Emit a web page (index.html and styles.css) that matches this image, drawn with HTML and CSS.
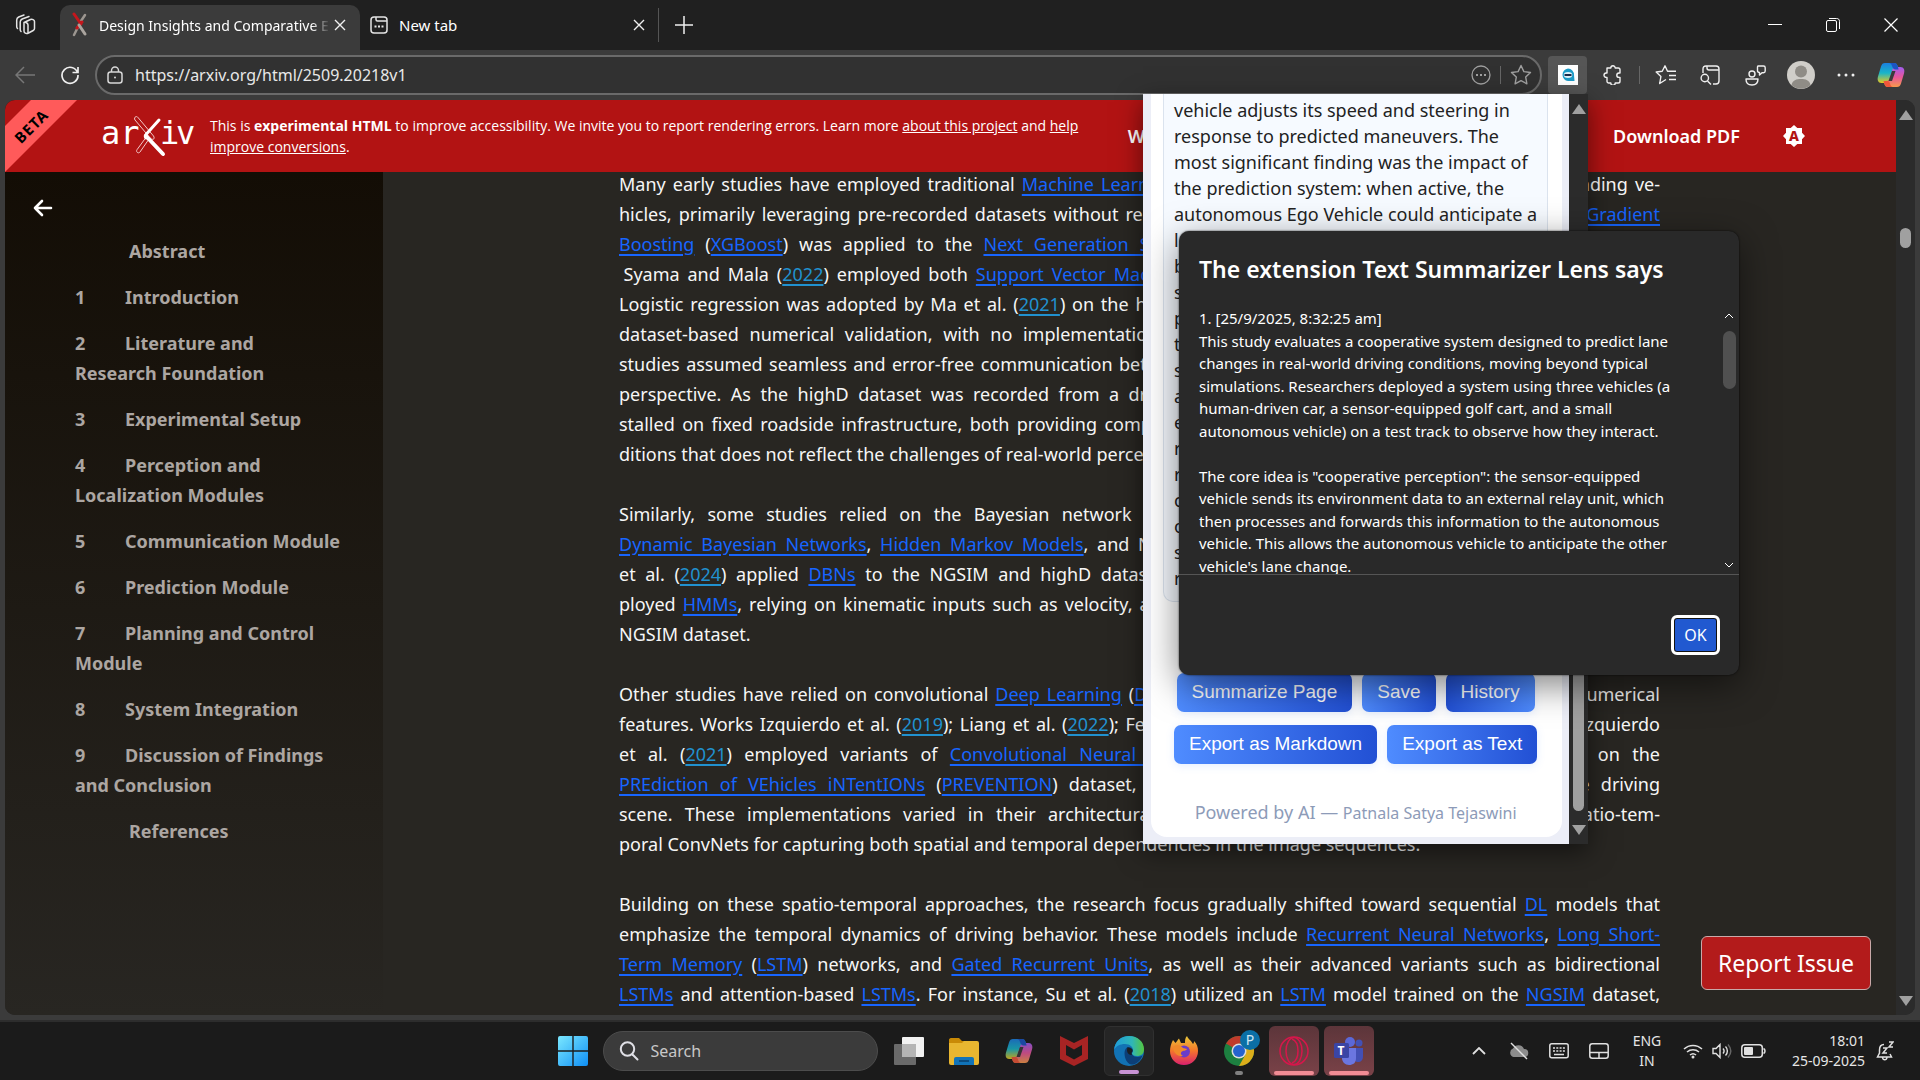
FILE: index.html
```html
<!DOCTYPE html>
<html lang="en">
<head>
  <meta charset="UTF-8">
  <meta name="viewport" content="width=device-width, initial-scale=1.0">
  <title>Design Insights and Comparative Evaluation</title>
  <link rel="stylesheet" href="styles.css">
</head>
<body>
  <svg class="defs" width="0" height="0" aria-hidden="true">
    <defs>
      <linearGradient id="cpBlue" x1="0" y1="0" x2="0" y2="1">
        <stop offset="0" stop-color="#1b7fe0"/><stop offset=".5" stop-color="#19b5c8"/><stop offset="1" stop-color="#e8c81e"/>
      </linearGradient>
      <linearGradient id="cpPink" x1="0" y1="0" x2="0" y2="1">
        <stop offset="0" stop-color="#a05cf0"/><stop offset=".5" stop-color="#e8569b"/><stop offset="1" stop-color="#f79a4b"/>
      </linearGradient>
      <linearGradient id="winBlue" x1="0" y1="0" x2="1" y2="1">
        <stop offset="0" stop-color="#7be8ff"/><stop offset="1" stop-color="#0f8ff5"/>
      </linearGradient>
      <linearGradient id="edgeTop" x1="0" y1="0" x2="1" y2="0">
        <stop offset="0" stop-color="#1f9bd8"/><stop offset=".6" stop-color="#2fb6b8"/><stop offset="1" stop-color="#55c63e"/>
      </linearGradient>
      <linearGradient id="ffOrange" x1="0" y1="0" x2="0" y2="1">
        <stop offset="0" stop-color="#e8c83a"/><stop offset=".5" stop-color="#f4772a"/><stop offset="1" stop-color="#d9206e"/>
      </linearGradient>
      <symbol id="copilot" viewBox="0 0 28 28">
        <path d="M8 2h9c2 0 3 1 3.600 3l.8 3h-3c-2 0-3 1-3.600 3l-2.600 8.500c-.6 2-1.600 2.500-3.500 2.500H4.500C1 22 0 19 1 15.500l3-10C4.700 3 6 2 8 2z" fill="url(#cpBlue)"/>
        <path d="M20 26h-9c-2 0-3-1-3.600-3L6.800 20h2.500c2 0 3-1 3.600-3l2.500-8.500C16 6.500 17 6 19 6h4.500c3.500 0 4.500 3 3.500 6.500l-3 10c-.7 2.500-2 3.500-4 3.500z" fill="url(#cpPink)"/>
        <path d="M12 2h5c2 0 3 1 3.600 3l1 3.500h-3c-2-.2-3-1.500-3.600-3.500-.5-2-1.500-3-3-3z" fill="#1b54c4"/>
        <path d="M6.500 20h3.400c1.600 0 2.600.6 3.100 2.500.5 2 1.500 3.500 3 3.500h-5c-2 0-3-1-3.500-3z" fill="#f0573a"/>
        <path d="M15 10h3.500L15 20h-3.500z" fill="#3b3b3b"/>
      </symbol>
    </defs>
  </svg>

  <div class="window">
    <div class="tabbar">
      <button class="workspaces" aria-label="Workspaces">
        <svg width="22" height="22" viewBox="0 0 22 22" fill="none" stroke="#e4e4e4" stroke-width="1.500" stroke-linejoin="round" stroke-linecap="round"><path d="M9 8.500l6.500-3c1.500-.7 4 .2 4 2v7c0 1-.4 1.600-1.300 2L13.500 19C11 20.200 9 19 9 17zM9 8.500c1.500-.5 4 .3 4 2.500v8"/><path d="M6 17.500c-.6-.5-.8-1-.8-2V8c0-1.500.6-2.200 2-3L14 2.500M2.500 14.500c-.6-.5-.8-1-.8-2V6c0-1.500.6-2.200 2-3L9 1"/></svg>
      </button>
      <div class="tab tab-active">
        <svg width="16" height="26" viewBox="0 0 16 26" fill="none" stroke-linecap="round"><path d="M13 3L9 9M6 15l-4 8" stroke="#9c9690" stroke-width="2.500"/><path d="M2 2l7 10M10 10l-5 6" stroke="#c4161c" stroke-width="3"/><path d="M7 13l6 9" stroke="#aaa49e" stroke-width="3"/></svg>
        <span class="tab-title fade">Design Insights and Comparative E</span>
        <button class="tab-close" aria-label="Close tab"><svg width="12" height="12" viewBox="0 0 12 12" stroke="#f0f0f0" stroke-width="1.400"><path d="M1 1l10 10M11 1L1 11"/></svg></button>
      </div>
      <div class="tab">
        <svg width="18" height="18" viewBox="0 0 18 18" fill="none" stroke="#e4e4e4" stroke-width="1.500"><rect x="1" y="1" width="16" height="16" rx="3"/><path d="M6 1v2.500c0 1 .5 1.500 1.500 1.500H17"/><path d="M4.500 10.500h2M8 10.500h2M11.500 10.500h2" stroke-width="2"/></svg>
        <span class="tab-title">New tab</span>
        <button class="tab-close" aria-label="Close tab"><svg width="12" height="12" viewBox="0 0 12 12" stroke="#f0f0f0" stroke-width="1.400"><path d="M1 1l10 10M11 1L1 11"/></svg></button>
      </div>
      <button class="new-tab" aria-label="New tab"><svg width="18" height="18" viewBox="0 0 18 18" stroke="#f0f0f0" stroke-width="1.500"><path d="M9 0v18M0 9h18"/></svg></button>
      <div class="window-controls">
        <button aria-label="Minimize"><svg width="14" height="14" viewBox="0 0 14 14" stroke="#fff"><path d="M0 6.500h14"/></svg></button>
        <button aria-label="Restore"><svg width="14" height="14" viewBox="0 0 14 14" fill="none" stroke="#fff"><rect x=".5" y="2.500" width="10" height="11" rx="1.500"/><path d="M3 .5h7.500c2 0 3 1 3 3V11"/></svg></button>
        <button aria-label="Close"><svg width="14" height="14" viewBox="0 0 14 14" stroke="#fff" stroke-width="1.200"><path d="M.5.5l13 13M13.500.5l-13 13"/></svg></button>
      </div>
    </div>

    <div class="toolbar">
      <button class="nav-btn" aria-label="Back"><svg width="20" height="18" viewBox="0 0 20 18" fill="none" stroke="#777" stroke-width="1.500"><path d="M9 1L1 9l8 8M1 9h19"/></svg></button>
      <button class="nav-btn" aria-label="Refresh"><svg width="20" height="20" viewBox="0 0 20 20" fill="none" stroke="#f0f0f0" stroke-width="1.700"><path d="M17.500 7.500A8 8 0 1 0 18 10M18 2v5.500h-5.500"/></svg></button>
      <div class="address">
        <svg width="16" height="18" viewBox="0 0 16 18" fill="none" stroke="#d8d8d8" stroke-width="1.500"><rect x="1" y="6" width="14" height="11" rx="2.500"/><path d="M4.500 6V4.500a3.500 3.500 0 0 1 7 0V6"/><circle cx="8" cy="11.500" r="1" fill="#d8d8d8" stroke="none"/></svg>
        <input class="url" type="text" aria-label="Address" value="https://arxiv.org/html/2509.20218v1">
        <button aria-label="More"><svg width="20" height="20" viewBox="0 0 20 20" fill="none" stroke="#a0a0a0" stroke-width="1.300"><circle cx="10" cy="10" r="9"/><path d="M5 10h2M9 10h2M13 10h2" stroke-width="2"/></svg></button>
        <span class="divider"></span>
        <button aria-label="Favorite"><svg width="22" height="22" viewBox="0 0 22 22" fill="none" stroke="#a0a0a0" stroke-width="1.400" stroke-linejoin="round"><path d="M11 1.500l2.900 6.100 6.600.9-4.800 4.600 1.200 6.700-5.900-3.200-5.900 3.200 1.200-6.700L1.500 8.500l6.600-.9z"/></svg></button>
      </div>
      <div class="tools">
        <button class="tool-active" aria-label="Text Summarizer Lens"><svg width="20" height="20" viewBox="0 0 20 20"><rect width="20" height="20" fill="#fff"/><path d="M10 3.500a6.300 6.300 0 0 1 6 6.500l.5 6H10a6.300 6.300 0 0 1 0-12.500z" fill="#1c9cc8"/><ellipse cx="10" cy="10" rx="4.300" ry="3" fill="#dff2fa"/><path d="M6.500 10h7" stroke="#1a2b4a" stroke-width="2"/></svg></button>
        <button aria-label="Extensions"><svg width="20" height="20" viewBox="0 0 20 20" fill="none" stroke="#f0f0f0" stroke-width="1.400" stroke-linejoin="round"><path d="M4 3h3.800a2.200 2.200 0 0 1 4.400 0h3c1 0 1.800.8 1.800 1.800V8h-1a2.200 2.200 0 0 0 0 4.400h1v3.800c0 1-.8 1.800-1.800 1.800h-3a2.200 2.200 0 0 1-4.400 0H5.800C4.800 18 4 17.200 4 16.200v-3.800H3.200a2.200 2.200 0 0 1 0-4.400H4z"/></svg></button>
        <span class="divider"></span>
        <button aria-label="Favorites"><svg width="22" height="20" viewBox="0 0 22 20" fill="none" stroke="#f0f0f0" stroke-width="1.400" stroke-linejoin="round"><path d="M11 14.500L4.700 18.500l1.200-7L1.200 7l6-.8L10 .8l2.500 5.400h8.500M14 10.500h7M14 14.500h7"/></svg></button>
        <button aria-label="Collections"><svg width="21" height="20" viewBox="0 0 21 20" fill="none" stroke="#f0f0f0" stroke-width="1.400"><path d="M3 8V4c0-1.800 1-3 3-3h10c2 0 3 1.200 3 3v12c0 2-1 3-3 3h-3M7 1v2c0 1.500.8 2 2 2h10"/><circle cx="4.800" cy="13" r="3.700"/><path d="M7.500 16l3.500 3.500"/></svg></button>
        <button aria-label="Feedback"><svg width="21" height="21" viewBox="0 0 21 21" fill="none" stroke="#f0f0f0" stroke-width="1.400" stroke-linejoin="round"><path d="M13 1h5.500c1 0 1.700.6 1.700 1.700V6c0 1-.7 1.700-1.700 1.700h-1.500L14.500 10V7.500c-1.500 0-2-.7-2-1.700V2.500C12.500 1.500 12.800 1 13 1z"/><circle cx="7" cy="9" r="3"/><path d="M1 14h12c0 4-1.500 6-6 6s-6-2-6-6z"/></svg></button>
        <button aria-label="Profile"><svg width="28" height="28" viewBox="0 0 28 28"><circle cx="14" cy="14" r="14" fill="#d0cec9"/><circle cx="14" cy="10.500" r="6" fill="#8f8c86"/><path d="M4.500 24c1-5 5-6 9.500-6s8.500 1 9.500 6A14 14 0 0 1 4.500 24z" fill="#8f8c86"/></svg></button>
        <button aria-label="Settings"><svg width="18" height="4" viewBox="0 0 18 4" fill="#f0f0f0"><circle cx="2" cy="2" r="1.500"/><circle cx="9" cy="2" r="1.500"/><circle cx="16" cy="2" r="1.500"/></svg></button>
        <button aria-label="Copilot"><svg width="28" height="28"><use href="#copilot"/></svg></button>
      </div>
    </div>

    <div class="viewport">
      <div class="page">
        <header class="site-header">
          <div class="beta"><span>BETA</span></div>
          <a class="logo" href="#" aria-label="arXiv">
            <svg width="94" height="44" viewBox="0 0 94 44">
              <text class="logo-text" x="-1" y="30">ar</text>
              <text class="logo-text" x="58" y="30">i</text>
              <text class="logo-text" x="74" y="30">v</text>
              <path d="M36 3.500L51.500 22c1 1.500.8 3-.3 3.300-1.200.2-2-.3-3-1.300L33 6c-1.500-2 1-5 3-2.500z" fill="none" stroke="#f3c8c8"/>
              <path d="M47 25L38 38c-1.500 2-4.500 0-3-2.300L45 22" fill="none" stroke="#f3c8c8"/>
              <path d="M57 6L44 20.500c-1 1-1 2 0 3.500" fill="none" stroke="#fff" stroke-width="3" stroke-linecap="round"/>
              <path d="M44 22l17 18" fill="none" stroke="#fff" stroke-width="4" stroke-linecap="round"/>
            </svg>
          </a>
          <p class="notice">This is <strong>experimental HTML</strong> to improve accessibility. We invite you to report rendering errors. Learn more <a href="#">about this project</a> and <a href="#">help<br>improve conversions</a>.</p>
          <nav class="site-nav">
            <a href="#">Why HTML?</a>
            <a href="#">Report Issue</a>
            <a href="#">Back to Abstract</a>
            <a href="#">Download PDF</a>
            <button aria-label="Toggle theme"><svg width="22" height="22" viewBox="0 0 22 22"><path d="M11 0l3.300 3H19v4.700L22 11l-3 3.300V19h-4.700L11 22l-3.300-3H3v-4.700L0 11l3-3.300V3h4.700z" fill="#fff"/><text class="theme-letter" x="11" y="16" text-anchor="middle">A</text></svg></button>
          </nav>
        </header>
        <div class="content">
          <aside class="toc">
            <button class="toc-back" aria-label="Hide contents"><svg width="20" height="18" viewBox="0 0 20 18" fill="none" stroke="#fff" stroke-width="2.600" stroke-linecap="round" stroke-linejoin="round"><path d="M9 2L2 9l7 7M2 9h16"/></svg></button>
            <ol>
              <li class="plain"><a href="#">Abstract</a></li>
              <li><a href="#"><span class="num">1</span>Introduction</a></li>
              <li><a href="#"><span class="num">2</span>Literature and<br>Research Foundation</a></li>
              <li><a href="#"><span class="num">3</span>Experimental Setup</a></li>
              <li><a href="#"><span class="num">4</span>Perception and<br>Localization Modules</a></li>
              <li><a href="#"><span class="num">5</span>Communication Module</a></li>
              <li><a href="#"><span class="num">6</span>Prediction Module</a></li>
              <li><a href="#"><span class="num">7</span>Planning and Control<br>Module</a></li>
              <li><a href="#"><span class="num">8</span>System Integration</a></li>
              <li><a href="#"><span class="num">9</span>Discussion of Findings<br>and Conclusion</a></li>
              <li class="plain"><a href="#">References</a></li>
            </ol>
          </aside>
          <article class="paper">
            <p>
              <span class="line">Many early studies have employed traditional <a href="#">Machine Learning</a> (<a href="#">ML</a>) for lane change prediction of the surrounding ve-</span>
              <span class="line">hicles, primarily leveraging pre-recorded datasets without real-time implementation. For instance, the <a href="#">eXtreme Gradient</a></span>
              <span class="line"><a href="#">Boosting</a> (<a href="#">XGBoost</a>) was applied to the <a href="#">Next Generation SIMulation</a> (<a href="#">NGSIM</a>) dataset by different research groups.</span>
              <span class="line">&#8197;Syama and Mala (<a class="cite" href="#">2022</a>) employed both <a href="#">Support Vector Machines</a> (<a href="#">SVMs</a>) and <a href="#">Random Forest</a> classifiers for prediction.</span>
              <span class="line">Logistic regression was adopted by Ma et al. (<a class="cite" href="#">2021</a>) on the highD dataset. These works were all limited to purely offline</span>
              <span class="line">dataset-based numerical validation, with no implementation on real vehicles. In addition, nearly all of these early</span>
              <span class="line">studies assumed seamless and error-free communication between vehicles, with all of their data taken from an elevated</span>
              <span class="line">perspective. As the highD dataset was recorded from a drone and the NGSIM data came from several cameras in-</span>
              <span class="line">stalled on fixed roadside infrastructure, both providing complete information on the whole scene and under ideal con-</span>
              <span class="line last">ditions that does not reflect the challenges of real-world perception systems.</span>
            </p>
            <p>
              <span class="line">Similarly, some studies relied on the Bayesian network family for the maneuver prediction tasks, including the</span>
              <span class="line"><a href="#">Dynamic Bayesian Networks</a>, <a href="#">Hidden Markov Models</a>, and Naive Bayes classifiers. The recent study of Zhang and Lin</span>
              <span class="line">et al. (<a class="cite" href="#">2024</a>) applied <a href="#">DBNs</a> to the NGSIM and highD datasets, whereas all of the other works in this direction em-</span>
              <span class="line">ployed <a href="#">HMMs</a>, relying on kinematic inputs such as velocity, acceleration and heading from the trajectories of the public</span>
              <span class="line last">NGSIM dataset.</span>
            </p>
            <p>
              <span class="line">Other studies have relied on convolutional <a href="#">Deep Learning</a> (<a href="#">DL</a>) models that process both camera images and numerical</span>
              <span class="line">features. Works Izquierdo et al. (<a class="cite" href="#">2019</a>); Liang et al. (<a class="cite" href="#">2022</a>); Fernández et al. (<a class="cite" href="#">2020a</a>); Benterki et al. (<a class="cite" href="#">2022b</a>) and Izquierdo</span>
              <span class="line">et al. (<a class="cite" href="#">2021</a>) employed variants of <a href="#">Convolutional Neural Networks</a> (<a href="#">CNNs</a>) for behavior prediction based on the</span>
              <span class="line"><a href="#">PREdiction of VEhicles iNTentIONs</a> (<a href="#">PREVENTION</a>) dataset, using many stacked RGB camera images of the driving</span>
              <span class="line">scene. These implementations varied in their architectural choices, from two-stream networks up to spatio-tem-</span>
              <span class="line last">poral ConvNets for capturing both spatial and temporal dependencies in the image sequences.</span>
            </p>
            <p>
              <span class="line">Building on these spatio-temporal approaches, the research focus gradually shifted toward sequential <a href="#">DL</a> models that</span>
              <span class="line">emphasize the temporal dynamics of driving behavior. These models include <a href="#">Recurrent Neural Networks</a>, <a href="#">Long Short-</a></span>
              <span class="line"><a href="#">Term Memory</a> (<a href="#">LSTM</a>) networks, and <a href="#">Gated Recurrent Units</a>, as well as their advanced variants such as bidirectional</span>
              <span class="line"><a href="#">LSTMs</a> and attention-based <a href="#">LSTMs</a>. For instance, Su et al. (<a class="cite" href="#">2018</a>) utilized an <a href="#">LSTM</a> model trained on the <a href="#">NGSIM</a> dataset,</span>
            </p>
          </article>
        </div>
        <button class="report">Report Issue</button>
      </div>
      <div class="scrollbar page-scroll">
        <span class="arrow-up"></span><span class="thumb"></span><span class="arrow-down"></span>
      </div>
    </div>
  </div>

  <section class="popup">
    <div class="popup-body">
      <div class="card">
        <p class="summary">vehicle adjusts its speed and steering in<br>response to predicted maneuvers. The<br>most significant finding was the impact of<br>the prediction system: when active, the<br>autonomous Ego Vehicle could anticipate a<br>lane change well before it happened and<br>begin to slow down early, making for a<br>smoother and safer response. Without<br>prediction, the vehicle only reacted once<br>the other car had entered its lane. The<br>study shows that shared perception<br>adds useful time for planning. It also<br>examines the delays of the relay and<br>reports that they stay small enough for<br>real use. The authors note that more<br>complex traffic and more vehicles are<br>open topics, and that future work will<br>study larger test areas with fully<br>realistic conditions.</p>
        <div class="actions">
          <button>Summarize Page</button>
          <button>Save</button>
          <button class="reverse">History</button>
        </div>
        <div class="actions">
          <button>Export as Markdown</button>
          <button>Export as Text</button>
        </div>
        <p class="credit">Powered by AI — <span>Patnala Satya Tejaswini</span></p>
      </div>
    </div>
    <div class="scrollbar popup-scroll">
      <span class="arrow-up"></span><span class="thumb"></span><span class="arrow-down"></span>
    </div>
  </section>

  <section class="alert" role="dialog" aria-labelledby="alert-title">
    <h2 id="alert-title">The extension Text Summarizer Lens says</h2>
    <div class="alert-scroll">
      <p>1. [25/9/2025, 8:32:25 am]<br>This study evaluates a cooperative system designed to predict lane<br>changes in real-world driving conditions, moving beyond typical<br>simulations. Researchers deployed a system using three vehicles (a<br>human-driven car, a sensor-equipped golf cart, and a small<br>autonomous vehicle) on a test track to observe how they interact.<br><br>The core idea is "cooperative perception": the sensor-equipped<br>vehicle sends its environment data to an external relay unit, which<br>then processes and forwards this information to the autonomous<br>vehicle. This allows the autonomous vehicle to anticipate the other<br>vehicle's lane change.</p>
      <div class="alert-bar">
        <svg width="10" height="6" viewBox="0 0 10 6" fill="none" stroke="#fff"><path d="M1 5l4-4 4 4"/></svg>
        <span class="alert-thumb"></span>
        <svg width="10" height="6" viewBox="0 0 10 6" fill="none" stroke="#fff"><path d="M1 1l4 4 4-4"/></svg>
      </div>
    </div>
    <div class="alert-foot"><button>OK</button></div>
  </section>

  <footer class="taskbar">
    <div class="apps">
      <button class="app" aria-label="Start"><svg width="30" height="30" viewBox="0 0 30 30" fill="url(#winBlue)"><path d="M0 2a2 2 0 0 1 2-2h12.300v14.300H0zM15.700 0H28a2 2 0 0 1 2 2v12.300H15.700zM0 15.700h14.300V30H2a2 2 0 0 1-2-2zM15.700 15.700H30V28a2 2 0 0 1-2 2H15.700z"/></svg></button>
      <label class="search">
        <svg width="20" height="20" viewBox="0 0 20 20" fill="none" stroke="#e0e0e6" stroke-width="2" stroke-linecap="round"><circle cx="8.500" cy="8" r="6.700"/><path d="M13.500 13.500l5 5"/></svg>
        <input type="text" placeholder="Search" aria-label="Search">
      </label>
      <button class="app" aria-label="Task view"><svg width="30" height="28" viewBox="0 0 30 28"><rect x="8" width="22" height="20" rx="1" fill="#f2f2f2"/><rect y="7" width="22" height="21" rx="1" fill="#6a6a6a"/><rect x="8" y="7" width="14" height="13" fill="#b5b5b5"/></svg></button>
      <button class="app" aria-label="File Explorer"><svg width="30" height="27" viewBox="0 0 30 27"><path d="M0 2C0 1 .7 0 2 0h8l3 3h10v5H0z" fill="#c98a06"/><path d="M0 5h13l2-2h13a2 2 0 0 1 2 2v20a2 2 0 0 1-2 2H2a2 2 0 0 1-2-2z" fill="#e8b630"/><path d="M5 27v-6a2 2 0 0 1 2-2h16a2 2 0 0 1 2 2v6z" fill="#1173b8"/><path d="M10 23h10" stroke="#0a4c80" stroke-width="2"/></svg></button>
      <button class="app" aria-label="Copilot"><svg class="dim" width="28" height="28"><use href="#copilot"/></svg></button>
      <button class="app" aria-label="McAfee"><svg width="28" height="30" viewBox="0 0 28 30"><path d="M0 0l14 7L28 0v23l-14 7-14-7zM6 9v10l8 4.500 8-4.500V9l-8 4.500z" fill="#a82424"/></svg></button>
      <button class="app app-current" aria-label="Microsoft Edge"><svg width="30" height="30" viewBox="0 0 30 30"><circle cx="15" cy="15" r="15" fill="#1272b4"/><path d="M0 14C1 5 7 0 15 0c9 0 15 6 15 13 0 5-3 7-7 7-3 0-5-1-5-2.500 0-1 1-1.500 1-3.500 0-3-3-6-8-6C6 8 2 10 0 14z" fill="url(#edgeTop)"/><path d="M10.500 17c0-3 1.500-5 3-6 3 0 5.500 1.500 5.500 4-1 1.500-1.500 2.500-.5 4 2 2.500 7 2.500 10 .5C26 26 21 29 17 28.500c-4-1-6.500-6-6.500-11.500z" fill="#0c3f77"/><path d="M13.500 11.500c3 0 5 1.500 5 3.500-1 1.500-1.500 2.500-.5 4-3 0-5-2-5-4.500 0-1 .2-2 .5-3z" fill="#1b1f22"/></svg></button>
      <button class="app" aria-label="Firefox"><svg width="30" height="30" viewBox="0 0 30 30"><path d="M18 0c1 3 4 4 6 8 1-1 1-2 1-3 3 3 4 6 4 10 0 8-6 14-14 14S1 23 1 15c0-4 1-7 3-11l2.500 3C8 5.500 9 3 10 2.500L12 7h4c0-3 0-5 2-7z" fill="url(#ffOrange)"/><circle cx="15" cy="15.500" r="6" fill="#6a3cc8"/><path d="M4 11c3-3 8-2 10 1l4 1c-1 2-4 1.500-5 2.500-2 1.500-1 3.500 1 4.500-5 1-10-3-10-9z" fill="#f08a2a"/></svg></button>
      <button class="app app-open" aria-label="Chrome"><svg class="chrome" width="30" height="30" viewBox="0 0 30 30"><circle cx="15" cy="15" r="15" fill="#1d8040"/><path d="M15 15L2 7.500A15 15 0 0 1 28 7.500H15z" fill="#c03b2c"/><path d="M28 7.500A15 15 0 0 1 15 30l6.500-11.500L21 7.500z" fill="#dcae1a"/><circle cx="15" cy="15" r="7.500" fill="#ddd"/><circle cx="15" cy="15" r="6" fill="#2563cf"/><circle cx="26" cy="4" r="10" fill="#0b6fa6"/><text class="badge-text" x="26" y="9" text-anchor="middle">P</text></svg></button>
      <button class="app app-alert" aria-label="Opera"><svg width="30" height="30" viewBox="0 0 30 30" fill="none" stroke="#d5174b" stroke-width="1.500"><circle cx="15" cy="15" r="14"/><ellipse cx="15" cy="15" rx="8" ry="13.500"/><path d="M13 3c8 3 8 21 0 24"/></svg></button>
      <button class="app app-alert" aria-label="Teams"><svg width="30" height="28" viewBox="0 0 30 28"><circle cx="25" cy="6" r="3.500" fill="#4350b5"/><circle cx="16" cy="5" r="5" fill="#5b68d8"/><path d="M20 11h9v8c0 4-2 6-5 6s-4-2-4-4z" fill="#4350b5"/><path d="M8 11h14v10c0 5-3 7-7 7s-7-3-7-7z" fill="#6b76e0"/><rect y="6" width="15" height="15" rx="1.500" fill="#3a45a5"/><text class="teams-letter" x="7" y="18" text-anchor="middle">T</text></svg></button>
    </div>
    <div class="tray">
      <button aria-label="Show hidden icons"><svg width="14" height="8" viewBox="0 0 14 8" fill="none" stroke="#e0e0e0" stroke-width="1.800"><path d="M1 7l6-6 6 6"/></svg></button>
      <button aria-label="OneDrive"><svg width="20" height="18" viewBox="0 0 20 18"><path d="M4.500 15A4.500 4.500 0 0 1 4 6.500 6 6 0 0 1 15 7a4 4 0 0 1 .5 8z" fill="#8c8c8c"/><path d="M2 1l16 16" stroke="#e0e0e0" stroke-width="1.500"/></svg></button>
      <button aria-label="Touch keyboard"><svg width="20" height="16" viewBox="0 0 20 16" fill="none" stroke="#e0e0e0" stroke-width="1.500"><rect x=".8" y=".8" width="18.400" height="14" rx="2"/><path d="M4 5h12M4 8h12" stroke-dasharray="2 1.300" stroke-width="1.600"/><path d="M5 11.500h10"/></svg></button>
      <button aria-label="Touchpad"><svg width="20" height="16" viewBox="0 0 20 16" fill="none" stroke="#e0e0e0" stroke-width="1.500"><rect x=".8" y=".8" width="18.400" height="14.400" rx="2.500"/><path d="M1 9.500h18M10 9.500v6"/></svg></button>
      <button class="lang">ENG<br>IN</button>
      <button class="status" aria-label="Network, volume, battery">
        <svg width="20" height="16" viewBox="0 0 20 16" fill="none" stroke="#e0e0e0" stroke-width="1.500"><path d="M1 6a13 13 0 0 1 18 0M4 9a9 9 0 0 1 12 0M7 12a4.500 4.500 0 0 1 6 0"/><circle cx="10" cy="14" r="1.500" fill="#e0e0e0" stroke="none"/></svg>
        <svg width="20" height="16" viewBox="0 0 20 16" fill="none" stroke="#e0e0e0" stroke-width="1.400"><path d="M1 5.500h3l4-4v13l-4-4H1zM11 5.500c1.300 1.500 1.300 3.500 0 5M13.500 3.500c2.500 2.500 2.500 6.500 0 9"/><path d="M16 1.500c3.500 4 3.500 9 0 13" stroke="#666"/></svg>
        <svg width="25" height="14" viewBox="0 0 25 14" fill="none" stroke="#e0e0e0" stroke-width="1.500"><rect x=".8" y=".8" width="20.500" height="12.400" rx="3"/><path d="M22.500 4.500c2 1 2 4 0 5"/><rect x="3" y="3" width="9" height="8" rx="1" fill="#e0e0e0" stroke="none"/></svg>
      </button>
      <button class="clock">18:01<br>25-09-2025</button>
      <button aria-label="Notifications"><svg width="18" height="20" viewBox="0 0 18 20" fill="none" stroke="#e0e0e0" stroke-width="1.500"><path d="M8 3.500C5 3.500 3.500 6 3.500 9v3L1.500 16h14l-1.500-3M6.500 16.500c.5 3 4 3 4.500 0M7 7h4l-4 5h4M13 1h4l-4 5h4"/></svg></button>
    </div>
  </footer>
</body>
</html>
```
FILE: styles.css
```css
* {
  box-sizing: border-box;
}

body {
  margin: 0;
  height: 100vh;
  display: flex;
  flex-direction: column;
  overflow: hidden;
  position: relative;
  background: #1b1b1b;
  color: #fff;
  font-family: "Noto Sans", "Open Sans", sans-serif;
}

button {
  display: flex;
  align-items: center;
  justify-content: center;
  padding: 0;
  border: none;
  background: none;
  color: inherit;
  font-family: inherit;
  flex-shrink: 0;
}

p, ol, h2 {
  margin: 0;
  padding: 0;
}

svg {
  flex-shrink: 0;
}

.defs {
  position: absolute;
}

/* browser window */
.window {
  flex: 1;
  min-height: 0;
  display: flex;
  flex-direction: column;
  background: #3b3b3b;
}

.tabbar {
  height: 50px;
  display: flex;
  align-items: center;
  background: #202020;
}

.workspaces {
  width: 60px;
  padding-right: 8px;
}

.tab {
  width: 300px;
  height: 45px;
  margin-top: 5px;
  padding: 0 13px 5px 10px;
  display: flex;
  align-items: center;
  gap: 11px;
  font-size: 15px;
}

.tab-active {
  background: #3b3b3b;
  border-radius: 10px 10px 0 0;
  padding-left: 12px;
  padding-right: 12px;
}

.tab-title {
  flex: 1;
  white-space: nowrap;
}

.fade {
  font-size: 14px;
  -webkit-mask-image: linear-gradient(to right, #000 92%, transparent);
  mask-image: linear-gradient(to right, #000 92%, transparent);
}

.tab-close {
  width: 16px;
  height: 24px;
}

.tab-active .tab-close {
  margin-left: -9px;
}

.new-tab {
  width: 50px;
  height: 34px;
  margin-left: -2px;
  border-left: 1px solid #555;
}

.window-controls {
  margin-left: auto;
  display: flex;
}

.window-controls button {
  width: 58px;
  height: 48px;
}

.toolbar {
  height: 50px;
  display: flex;
  align-items: center;
}

.nav-btn {
  width: 45px;
  height: 40px;
  padding-left: 4px;
}

.address {
  flex: 1;
  height: 40px;
  margin-left: 5px;
  padding: 0 8px 0 10px;
  display: flex;
  align-items: center;
  gap: 9px;
  background: #313131;
  border: 2px solid #6a6a6a;
  border-radius: 20px;
}

.url {
  flex: 1;
  padding: 0 0 0 3px;
  border: none;
  background: none;
  outline: none;
  color: #e8e8e8;
  font-family: inherit;
  font-size: 16px;
}

.divider {
  width: 1px;
  height: 18px;
  background: #666;
}

.tools {
  display: flex;
  align-items: center;
  padding: 0 7px 0 6px;
}

.tools button {
  width: 45px;
  height: 38px;
}

.tools button:nth-child(2) {
  width: 52px;
}

.tools .tool-active {
  width: 39px;
  background: #565656;
  border-radius: 4px;
}

.tools .divider {
  margin-right: 3px;
}

.viewport {
  flex: 1;
  min-height: 0;
  display: flex;
  margin: 0 5px 5px;
  border-radius: 10px;
  overflow: hidden;
  background: #2b2b2b;
}

.page {
  flex: 1;
  min-width: 0;
  display: flex;
  flex-direction: column;
  position: relative;
  isolation: isolate;
  background: #282622;
}

.site-header {
  height: 72px;
  display: flex;
  align-items: center;
  flex-shrink: 0;
  position: relative;
  z-index: 1;
  background: #b21313;
}

.beta {
  width: 72px;
  height: 72px;
  display: flex;
  background: #ff5a5a;
  clip-path: polygon(26px 0, 72px 0, 0 72px, 0 26px);
  color: #000;
  font-size: 15px;
  font-weight: 700;
}

.beta span {
  width: 52px;
  height: 52px;
  line-height: 52px;
  text-align: center;
  letter-spacing: 1px;
  transform: rotate(-45deg);
}

.logo {
  width: 94px;
  height: 44px;
  margin: 0 14px 0 25px;
}

.logo-text {
  font-family: "DejaVu Sans Mono", monospace;
  font-size: 32px;
  fill: #fff;
}

.notice {
  font-family: "Open Sans", "Noto Sans", sans-serif;
  font-size: 14px;
  line-height: 21px;
  white-space: nowrap;
}

.notice a,
.site-nav a {
  color: #fff;
}

.site-nav {
  margin-left: auto;
  padding-right: 91px;
  display: flex;
  align-items: center;
  gap: 43px;
}

.site-nav a {
  font-size: 18px;
  font-weight: 600;
  text-decoration: none;
  white-space: nowrap;
}

.theme-letter {
  font-size: 14px;
  font-weight: 800;
  fill: #b21313;
}

.content {
  flex: 1;
  min-height: 0;
  display: flex;
}

.toc {
  width: 378px;
  padding: 24px 26px;
  flex-shrink: 0;
  background: linear-gradient(#130d05, #282622);
}

.toc-back {
  height: 24px;
  margin-left: 2px;
}

.toc ol {
  margin: 16px 0 0 44px;
  list-style: none;
  font-size: 18px;
  line-height: 30px;
  font-weight: 700;
}

.toc li {
  margin-bottom: 16px;
}

.toc a {
  color: #aca6a2;
  text-decoration: none;
}

.toc .plain {
  padding-left: 54px;
}

.num {
  display: inline-block;
  width: 50px;
}

.paper {
  flex: 1;
  min-width: 0;
  padding: 0 236px;
  /* scrolled part way down the section */
  margin-top: -3px;
  font-size: 18px;
  line-height: 30px;
  color: #f6f6f6;
}

.paper p {
  margin-bottom: 30px;
}

.line {
  display: block;
  white-space: nowrap;
  text-align: justify;
  text-align-last: justify;
}

.last {
  text-align-last: left;
}

.paper a {
  color: #1765ff;
  text-decoration-thickness: 2px;
  text-underline-offset: 3px;
}

.paper .cite {
  color: #2191cf;
}

.report {
  position: absolute;
  right: 25px;
  bottom: 25px;
  width: 170px;
  height: 54px;
  background: #b31b1b;
  border: 1px solid #c9a9a9;
  border-radius: 6px;
  font-size: 23px;
}

/* scrollbars */
.scrollbar {
  width: 19px;
  flex-shrink: 0;
  display: flex;
  flex-direction: column;
  align-items: center;
  background: #2b2b2b;
}

.arrow-up,
.arrow-down {
  border-left: 7px solid transparent;
  border-right: 7px solid transparent;
}

.arrow-up {
  border-bottom: 10px solid #a0a0a0;
}

.arrow-down {
  margin-top: auto;
  border-top: 10px solid #a0a0a0;
}

.thumb {
  width: 11px;
  background: #a0a0a0;
  border-radius: 6px;
}

.page-scroll {
  padding: 10px 0 9px;
}

.page-scroll .thumb {
  margin-top: 108px;
  height: 20px;
}

/* extension popup */
.popup {
  position: absolute;
  top: 94px;
  right: 332px;
  width: 445px;
  height: 750px;
  display: flex;
  overflow: hidden;
  background: #eceef7;
  box-shadow: 0 8px 24px rgba(0, 0, 0, 0.5);
  color: #222b3a;
}

.popup-body {
  flex: 1;
  padding: 0 7px 7px 8px;
}

.card {
  height: 100%;
  padding: 0 14px 0 12px;
  background: #fff;
  border-radius: 0 0 16px 16px;
}

.summary {
  margin-bottom: 71px;
  padding: 3px 10px 10px;
  border: 1px solid #dbe3ee;
  border-top: none;
  border-radius: 0 0 10px 10px;
  background: #f6faff;
  color: #222;
  font-size: 18px;
  line-height: 26px;
  white-space: nowrap;
}

.actions {
  display: flex;
  justify-content: center;
  gap: 10px;
  margin-bottom: 13px;
}

.actions button {
  height: 39px;
  padding: 0 15px 2px;
  background: linear-gradient(90deg, #4f8cff, #2250d4);
  border-radius: 7px;
  box-shadow: 0 2px 8px rgba(79, 140, 255, 0.15);
  color: #fff;
  font-family: "Liberation Sans", Arial, sans-serif;
  font-size: 19px;
}

.actions .reverse {
  background: linear-gradient(90deg, #2250d4, #4f8cff);
}

.credit {
  padding-top: 23px;
  text-align: center;
  color: #8d9bb8;
  font-size: 18px;
  line-height: 24px;
}

.credit span {
  font-size: 16px;
}

.popup-scroll {
  padding: 10px 0 9px;
}

.popup-scroll .thumb {
  height: 380px;
  margin: auto 0 10px;
}

.popup-scroll .arrow-down {
  margin-top: 4px;
}

/* alert dialog */
.alert {
  position: absolute;
  top: 231px;
  right: 181px;
  width: 560px;
  height: 444px;
  display: flex;
  flex-direction: column;
  background: #292929;
  border-radius: 10px;
  box-shadow: 0 10px 36px rgba(0, 0, 0, 0.5), 0 0 2px rgba(0, 0, 0, 0.8);
}

.alert h2 {
  padding: 22px 20px;
  font-size: 23px;
  line-height: 32px;
  font-weight: 600;
}

.alert-scroll {
  flex: 1;
  min-height: 0;
  display: flex;
  justify-content: space-between;
  overflow: hidden;
  border-bottom: 1px solid #555;
}

.alert-scroll p {
  padding-left: 20px;
  font-size: 15px;
  line-height: 1.5;
  white-space: nowrap;
}

.alert-bar {
  width: 20px;
  padding: 6px 0;
  display: flex;
  flex-direction: column;
  align-items: center;
  justify-content: space-between;
}

.alert-thumb {
  width: 13px;
  height: 58px;
  margin: 12px 0 auto;
  background: #505050;
  border-radius: 7px;
}

.alert-foot {
  height: 100px;
  padding: 43px 22px 0;
  display: flex;
  justify-content: flex-end;
}

.alert-foot button {
  width: 43px;
  height: 34px;
  background: #2159d0;
  border: 1px solid #111;
  border-radius: 3px;
  outline: 3px solid #fff;
  font-size: 16px;
}

/* taskbar */
.taskbar {
  height: 60px;
  display: grid;
  grid-template-columns: 1fr auto 1fr;
  align-items: center;
  background: #1b1b1b;
  border-top: 2px solid #2d2d2d;
}

.apps {
  grid-column: 2;
  display: flex;
  align-items: center;
}

.app {
  width: 50px;
  height: 50px;
  margin: 0 2px 0 3px;
  border-radius: 6px;
  position: relative;
}

.app-current {
  background: #252525;
  border: 1px solid #303030;
}

.app-current::after,
.app-open::after,
.app-alert::after {
  content: "";
  position: absolute;
  bottom: 1px;
  width: 20px;
  height: 4px;
  border-radius: 2px;
  background: #c792d4;
}

.app-open::after {
  width: 8px;
  background: #808080;
}

.app-alert {
  background: linear-gradient(#5c353a, #7a4248);
}

.app-alert::after {
  width: 40px;
  background: #f08c94;
}

.chrome {
  overflow: visible;
}

.dim {
  opacity: 0.8;
}

.search {
  width: 275px;
  height: 40px;
  margin: 0 3px;
  padding: 0 15px;
  display: flex;
  align-items: center;
  gap: 12px;
  background: #3b3b3b;
  border: 1px solid #4c4c4c;
  border-radius: 20px;
}

.search input {
  width: 180px;
  padding: 0;
  border: none;
  background: none;
  font-family: inherit;
  font-size: 16px;
}

.search input::placeholder {
  color: #c8c8c8;
}

.badge-text {
  font-size: 14px;
  fill: #cfe6f2;
}

.teams-letter {
  font-size: 12px;
  font-weight: 700;
  fill: #fff;
}

.tray {
  display: flex;
  align-items: center;
  justify-content: flex-end;
  padding-right: 15px;
  color: #e6e6e6;
}

.tray button {
  width: 40px;
  height: 48px;
  font-size: 14px;
  line-height: 20px;
}

.tray .lang {
  width: 56px;
}

.tray .status {
  width: 98px;
  gap: 9px;
}

.tray .clock {
  width: 92px;
  justify-content: flex-end;
  text-align: right;
}
```
